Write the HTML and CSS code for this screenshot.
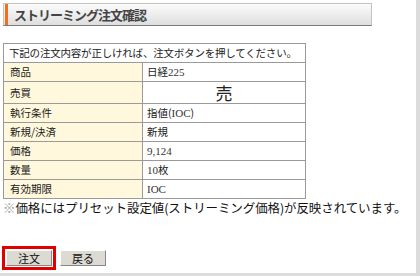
FILE: index.html
```html
<!DOCTYPE html>
<html lang="ja">
<head>
    <meta charset="UTF-8">
    <title>ストリーミング注文確認</title>
    <link rel="stylesheet" href="styles.css">
</head>
<body>
    <div class="frame">
        <header class="title-bar">
            <h1 class="title">ストリーミング注文確認</h1>
        </header>
        <table class="order">
            <tr>
                <td colspan="2" class="lead">下記の注文内容が正しければ、注文ボタンを押してください。</td>
            </tr>
            <tr>
                <th>商品</th>
                <td>日経<span class="num">225</span></td>
            </tr>
            <tr class="side-row">
                <th>売買</th>
                <td class="side">売</td>
            </tr>
            <tr>
                <th>執行条件</th>
                <td>指値(<span class="num">IOC</span>)</td>
            </tr>
            <tr>
                <th>新規/決済</th>
                <td>新規</td>
            </tr>
            <tr>
                <th>価格</th>
                <td class="num">9,124</td>
            </tr>
            <tr>
                <th>数量</th>
                <td><span class="num">10</span>枚</td>
            </tr>
            <tr>
                <th>有効期限</th>
                <td class="num">IOC</td>
            </tr>
        </table>
        <p class="note"><span class="mark">※</span>価格にはプリセット設定値(ストリーミング価格)が反映されています。</p>
        <div class="actions">
            <div class="hilite"><button type="button" class="btn">注文</button></div>
            <button type="button" class="btn">戻る</button>
        </div>
    </div>
</body>
</html>
```

FILE: styles.css
```css
body {
    margin: 0;
    background: #fff;
    font-family: "Noto Sans CJK JP", "DejaVu Sans", sans-serif;
    color: #222;
}
.frame {
    width: 420px;
    height: 276px;
    box-sizing: border-box;
    border-right: 4px solid #dcdcdc;
    border-bottom: 3px solid #dcdcdc;
    padding: 3px 0 0 3px;
    overflow: hidden;
}
.title-bar {
    width: 369px;
    height: 23px;
    box-sizing: border-box;
    border: 1px solid #c4c4c4;
    border-bottom-color: #7a7a7a;
    padding-left: 1px;
    background: linear-gradient(#fbfbfb, #ececec 55%, #dedede);
}
.title {
    margin: 0;
    height: 100%;
    border-left: 3px solid #f0701e;
    padding-left: 6px;
    font-size: 13px;
    letter-spacing: -1px;
    font-weight: bold;
    line-height: 21px;
    color: #444;
    white-space: nowrap;
}
/* 注文内容 */
.order {
    margin-top: 17px;
    width: 303px;
    border-collapse: collapse;
    font-size: 10.5px;
}
.order th,
.order td {
    border: 1px solid #9a9a9a;
    height: 18px;
    padding: 0 4px;
    text-align: left;
    font-weight: normal;
    line-height: 16px;
    white-space: nowrap;
}
.order th {
    width: 128px;
    background: #fff8dc;
    padding-left: 6px;
}
.order .lead {
    padding-left: 5px;
    letter-spacing: -0.2px;
}
.num {
    font-family: "Liberation Serif", serif;
    font-size: 11px;
    color: #333;
}
.side-row th,
.side-row td {
    height: 21px;
}
.side {
    text-align: center !important;
    font-size: 17px;
}
.note {
    margin: 1px 0 0;
    font-size: 12.5px;
    letter-spacing: -0.1px;
    line-height: 16px;
    color: #111;
    white-space: nowrap;
}
.mark {
    color: #999;
}
.actions {
    margin-top: 30px;
    display: flex;
    align-items: center;
    gap: 4px;
    margin-left: -1px;
}
.hilite {
    display: flex;
    border: 3px solid #e00000;
    padding: 1px;
}
.btn {
    width: 46px;
    height: 16px;
    padding: 0;
    border: 1px solid #888;
    border-top-color: #fff;
    border-left-color: #fff;
    background: #dcdad2;
    font-family: "Noto Sans CJK JP", sans-serif;
    font-size: 11px;
    line-height: 14px;
    color: #111;
}
```
